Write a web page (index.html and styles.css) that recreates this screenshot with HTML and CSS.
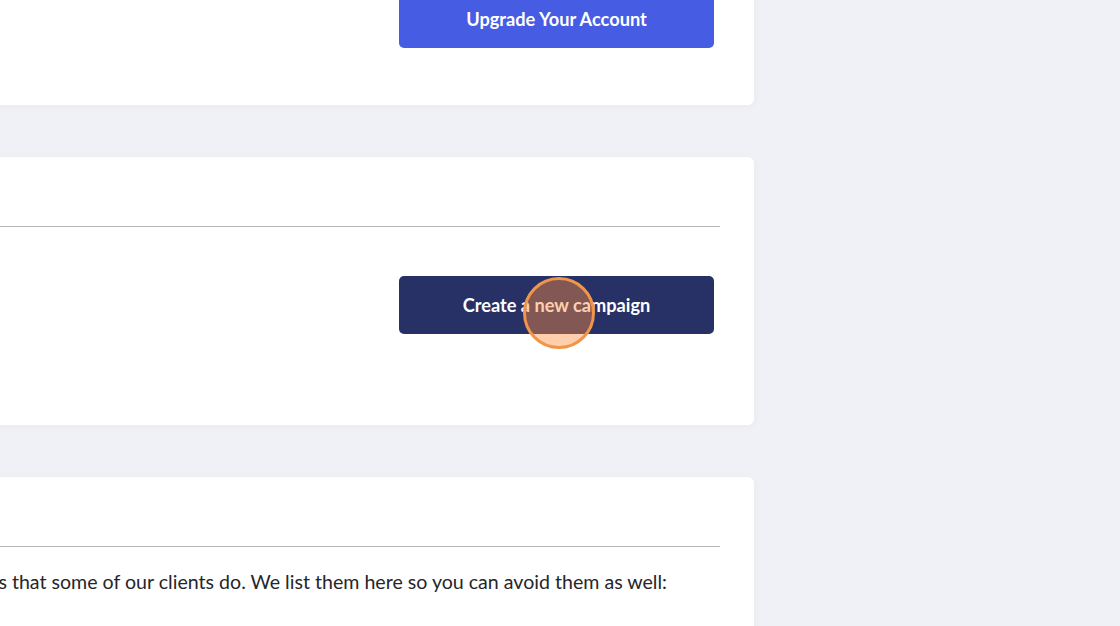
FILE: index.html
```html
<!DOCTYPE html>
<html>
<head>
<meta charset="utf-8">
<link rel="stylesheet" href="styles.css">
</head>
<body>
<div class="page">
  <div class="main">
    <section class="card card-upgrade">
      <div class="card-row">
        <button class="btn btn-blue">Upgrade Your Account</button>
      </div>
    </section>
    <section class="card">
      <div class="card-header"></div>
      <div class="card-body card-body-btn">
        <button class="btn btn-navy">Create a new campaign</button>
      </div>
    </section>
    <section class="card">
      <div class="card-header"></div>
      <div class="card-body card-body-text">
        <p class="text">Here are some common mistakes that some of our clients do. We list them here so you can avoid them as well:</p>
      </div>
    </section>
  </div>
</div>
<div class="cursor"></div>
</body>
</html>
```
FILE: styles.css
```css
html, body {
  margin: 0;
  padding: 0;
  height: 100%;
  overflow: hidden;
}
body {
  background: #eff1f6;
  font-family: "Lato", "Liberation Sans", sans-serif;
  color: #26262a;
}
.page {
  display: flex;
  justify-content: flex-end;
  width: 754px;
}
.main {
  flex: none;
  width: 1100px;
  display: flex;
  flex-direction: column;
  gap: 52px;
  margin-top: -40px;
}
.card {
  background: #fff;
  border-radius: 6px;
  box-shadow: 0 1px 8px rgba(40, 60, 110, 0.04);
}
.card-upgrade .card-row {
  display: flex;
  justify-content: flex-end;
  padding: 30px 40px 57px 0;
}
.card-header {
  height: 70px;
  border-bottom: 1px solid #b5b5b8;
  margin-right: 34px;
  box-sizing: border-box;
}
.card-body-btn {
  display: flex;
  justify-content: flex-end;
  padding: 49px 40px 91px 0;
}
.card-body-text {
  display: flex;
  justify-content: flex-end;
  padding: 21px 0 40px 0;
}
.btn {
  width: 315px;
  height: 58px;
  border: none;
  border-radius: 5px;
  color: #fff;
  font-family: "Lato", "Liberation Sans", sans-serif;
  font-weight: 700;
  font-size: 18.2px;
  cursor: pointer;
}
.btn-blue {
  background: #465ce3;
}
.btn-navy {
  background: #283166;
}
.text {
  margin: 0;
  font-size: 19.6px;
  line-height: 28px;
  white-space: nowrap;
  padding-right: 87px;
}
.cursor {
  position: absolute;
  left: 523px;
  top: 277px;
  width: 66px;
  height: 66px;
  border-radius: 50%;
  border: 3px solid #f0964a;
  background: rgba(255, 140, 60, 0.42);
}
```
